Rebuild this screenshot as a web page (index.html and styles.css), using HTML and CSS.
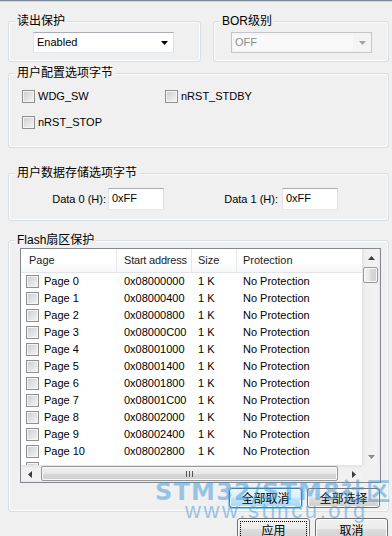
FILE: index.html
```html
<!DOCTYPE html>
<html>
<head>
<meta charset="utf-8">
<link rel="stylesheet" href="styles.css">
</head>
<body>
<div class="window">
  <div class="row-top">
    <div class="group g-read">
      <div class="group-title">读出保护</div>
      <div class="combo">
        <span class="combo-text">Enabled</span>
        <span class="combo-arrow"><svg width="7" height="4" viewBox="0 0 7 4"><polygon points="0,0 7,0 3.5,4" fill="#000"/></svg></span>
      </div>
    </div>
    <div class="group g-bor">
      <div class="group-title">BOR级别</div>
      <div class="combo disabled">
        <span class="combo-text"><span class="combo-sel">OFF</span></span>
        <span class="combo-arrow"><svg width="7" height="4" viewBox="0 0 7 4"><polygon points="0,0 7,0 3.5,4" fill="#a3a3a3"/></svg></span>
      </div>
    </div>
  </div>

  <div class="group g-user">
    <div class="group-title">用户配置选项字节</div>
    <div class="check-grid">
      <label class="check"><span class="box"></span><span>WDG_SW</span></label>
      <label class="check"><span class="box"></span><span>nRST_STDBY</span></label>
      <label class="check"><span class="box"></span><span>nRST_STOP</span></label>
    </div>
  </div>

  <div class="group g-data">
    <div class="group-title">用户数据存储选项字节</div>
    <div class="data-row">
      <span class="data-label l0">Data 0 (H):</span>
      <span class="input">0xFF</span>
      <span class="data-label l1">Data 1 (H):</span>
      <span class="input">0xFF</span>
    </div>
  </div>

  <div class="group g-flash">
    <div class="group-title">Flash扇区保护</div>
    <div class="listview">
      <div class="lv-main">
        <div class="lv-head">
          <div class="hc c1">Page</div>
          <div class="hc c2">Start address</div>
          <div class="hc c3">Size</div>
          <div class="hc c4">Protection</div>
        </div>
        <div class="lv-row"><div class="cc c1"><span class="box"></span>Page 0</div><div class="cc c2">0x08000000</div><div class="cc c3">1 K</div><div class="cc c4">No Protection</div></div>
        <div class="lv-row"><div class="cc c1"><span class="box"></span>Page 1</div><div class="cc c2">0x08000400</div><div class="cc c3">1 K</div><div class="cc c4">No Protection</div></div>
        <div class="lv-row"><div class="cc c1"><span class="box"></span>Page 2</div><div class="cc c2">0x08000800</div><div class="cc c3">1 K</div><div class="cc c4">No Protection</div></div>
        <div class="lv-row"><div class="cc c1"><span class="box"></span>Page 3</div><div class="cc c2">0x08000C00</div><div class="cc c3">1 K</div><div class="cc c4">No Protection</div></div>
        <div class="lv-row"><div class="cc c1"><span class="box"></span>Page 4</div><div class="cc c2">0x08001000</div><div class="cc c3">1 K</div><div class="cc c4">No Protection</div></div>
        <div class="lv-row"><div class="cc c1"><span class="box"></span>Page 5</div><div class="cc c2">0x08001400</div><div class="cc c3">1 K</div><div class="cc c4">No Protection</div></div>
        <div class="lv-row"><div class="cc c1"><span class="box"></span>Page 6</div><div class="cc c2">0x08001800</div><div class="cc c3">1 K</div><div class="cc c4">No Protection</div></div>
        <div class="lv-row"><div class="cc c1"><span class="box"></span>Page 7</div><div class="cc c2">0x08001C00</div><div class="cc c3">1 K</div><div class="cc c4">No Protection</div></div>
        <div class="lv-row"><div class="cc c1"><span class="box"></span>Page 8</div><div class="cc c2">0x08002000</div><div class="cc c3">1 K</div><div class="cc c4">No Protection</div></div>
        <div class="lv-row"><div class="cc c1"><span class="box"></span>Page 9</div><div class="cc c2">0x08002400</div><div class="cc c3">1 K</div><div class="cc c4">No Protection</div></div>
        <div class="lv-row"><div class="cc c1"><span class="box"></span>Page 10</div><div class="cc c2">0x08002800</div><div class="cc c3">1 K</div><div class="cc c4">No Protection</div></div>
        <div class="lv-row partial"><div class="cc c1"><span class="box"></span></div></div>
      </div>
      <div class="vscroll">
        <div class="sb-arrow"><svg width="7" height="4" viewBox="0 0 7 4"><polygon points="0,4 7,4 3.5,0" fill="#3c3c3c"/></svg></div>
        <div class="vthumb"></div>
        <div class="sb-fill"></div>
        <div class="sb-arrow"><svg width="7" height="4" viewBox="0 0 7 4"><polygon points="0,0 7,0 3.5,4" fill="#8a8a8a"/></svg></div>
      </div>
      <div class="hscroll">
        <div class="sb-arrow h"><svg width="4" height="7" viewBox="0 0 4 7"><polygon points="4,0 4,7 0,3.5" fill="#3c3c3c"/></svg></div>
        <div class="hthumb"><svg width="7" height="6" viewBox="0 0 7 6"><rect x="0" y="0" width="1" height="6" fill="#555"/><rect x="3" y="0" width="1" height="6" fill="#555"/><rect x="6" y="0" width="1" height="6" fill="#555"/></svg></div>
        <div class="sb-fill"></div>
        <div class="sb-arrow h"><svg width="4" height="7" viewBox="0 0 4 7"><polygon points="0,0 0,7 4,3.5" fill="#3c3c3c"/></svg></div>
      </div>
      <div class="corner"></div>
    </div>
    <div class="btn-row inner">
      <div class="btn hot">全部取消</div>
      <div class="btn">全部选择</div>
    </div>
  </div>

  <div class="btn-row bottom">
    <div class="btn tall focus">应用</div>
    <div class="btn tall">取消</div>
  </div>

  <div class="watermark wm1">STM32/STM8社区</div>
  <div class="watermark wm2">www.stmcu.org</div>
</div>
</body>
</html>
```

FILE: styles.css
```css
* { box-sizing: border-box; }
html, body { margin: 0; padding: 0; background: #f0f0f0; }
body {
  font: 11px "Liberation Sans", "Noto Sans CJK SC", sans-serif;
  color: #000;
}
.window {
  position: relative;
  width: 392px;
  height: 536px;
  overflow: hidden;
  border-top: 1px solid #7d8a99;
  box-shadow: inset 0 1px 0 #cfd7df;
  padding: 20px 3px 0 8px;
  background: #f0f0f0;
}
.row-top { display: flex; gap: 12px; }
.group {
  border: 1px solid #d5dfe5;
  border-radius: 3px;
  box-shadow: inset 0 0 0 1px #fbfcfd;
}
.group-title {
  width: fit-content;
  margin: -8px 0 0 6px;
  padding: 0 2px;
  background: #f0f0f0;
  font: 12px/14px "Liberation Sans", "Noto Sans CJK SC", sans-serif;
}
.g-read { width: 193px; padding-bottom: 8px; }
.g-bor { width: 176px; padding-bottom: 8px; }
.combo {
  display: flex;
  width: 141px;
  height: 21px;
  margin-top: 4px;
  background: #fff;
  border: 1px solid;
  border-color: #abadb3 #dbdfe6 #e3e9ef #e2e3ea;
}
.g-read .combo { margin-left: 24px; }
.g-bor .combo { margin-left: 17px; }
.combo-text { flex: 1; padding-left: 3px; line-height: 19px; }
.combo-arrow { width: 17px; display: flex; align-items: center; justify-content: center; padding-top: 1px; }
.combo.disabled {
  background: #f4f4f4;
  border-color: #c3c5c8;
  color: #8c8c8c;
}
.combo.disabled .combo-text { padding: 2px 1px 2px 2px; line-height: 15px; }
.combo-sel { display: block; background: #f9f9f9; padding-left: 1px; }
.g-user { margin-top: 11px; padding-bottom: 18px; }
.check-grid {
  display: grid;
  grid-template-columns: 143px auto;
  row-gap: 13px;
  margin: 10px 0 0 13px;
}
.check { display: flex; align-items: center; gap: 3px; line-height: 13px; }
.box {
  display: inline-block;
  flex: none;
  width: 13px;
  height: 13px;
  border: 1px solid #8f8f8f;
  background: linear-gradient(135deg, #c9ccd0, #eeeeee 80%, #f6f6f6);
  box-shadow: inset 0 0 0 1px #f4f4f4;
}
.g-data { margin-top: 25px; padding-bottom: 10px; }
.data-row { display: flex; align-items: center; margin-top: 8px; }
.data-label { text-align: right; line-height: 14px; }
.data-label.l0 { width: 97px; margin-right: 2px; }
.data-label.l1 { width: 114px; margin-right: 4px; }
.input {
  width: 56px;
  height: 22px;
  padding: 2px 3px 4px 3px;
  line-height: 14px;
  background: #fff;
  border: 1px solid;
  border-color: #abadb3 #dbdfe6 #e3e9ef #e2e3ea;
}
.g-flash { margin-top: 19px; padding: 0 8px 3px 0; }
.listview {
  display: grid;
  grid-template-columns: 341px 18px;
  grid-template-rows: 216px 17px;
  width: 361px;
  height: 235px;
  margin: 1px 0 0 11px;
  border: 1px solid #828790;
  background: #fff;
}
.lv-main { overflow: hidden; background: #fff; }
.lv-head, .lv-row {
  display: grid;
  grid-template-columns: 96px 75px 45px 1fr;
}
.lv-head {
  height: 24px;
  background: linear-gradient(#ffffff, #ffffff 55%, #f6f7f9);
  border-bottom: 1px solid #e2e4e7;
}
.hc { line-height: 23px; white-space: nowrap; border-right: 1px solid #e4e7eb; color: #1b1b1b; }
.hc.c4 { border-right: none; }
.hc.c1 { padding-left: 8px; }
.hc.c2 { padding-left: 7px; letter-spacing: -0.2px; }
.hc.c3, .hc.c4 { padding-left: 6px; }
.lv-row { height: 17px; line-height: 17px; }
.cc { white-space: nowrap; }
.cc.c1 { display: flex; align-items: center; gap: 5px; padding-left: 5px; }
.lv-row.partial .cc.c1 { height: 17px; }
.cc.c2 { padding-left: 7px; }
.cc.c3, .cc.c4 { padding-left: 6px; }
.vscroll {
  display: flex;
  flex-direction: column;
  background: linear-gradient(90deg, #e5e5e5, #f0f0f0 15%, #f2f2f2 85%, #e8e8e8);
  border-left: 1px solid #e6e6e6;
}
.sb-arrow { flex: none; width: 17px; height: 17px; display: flex; align-items: center; justify-content: center; }
.sb-fill { flex: 1; }
.vthumb {
  flex: none;
  width: 15px;
  height: 16px;
  margin: 1px 0 0 0;
  border: 1px solid #989898;
  border-radius: 2px;
  background: linear-gradient(90deg, #f3f3f3, #e6e6e6 50%, #d9d9d9 50%, #d0d0d0);
  box-shadow: inset 0 0 0 1px #f8f8f8;
}
.hscroll {
  display: flex;
  background: linear-gradient(#e5e5e5, #f0f0f0 15%, #f2f2f2 85%, #e8e8e8);
  border-top: 1px solid #e6e6e6;
}
.hthumb {
  flex: none;
  width: 297px;
  height: 15px;
  margin: 0 0 0 3px;
  border: 1px solid #989898;
  border-radius: 2px;
  background: linear-gradient(#f3f3f3, #e6e6e6 50%, #d9d9d9 50%, #d0d0d0);
  box-shadow: inset 0 0 0 1px #f8f8f8;
  display: flex;
  align-items: center;
  justify-content: center;
}
.corner { background: #f0f0f0; }
.btn-row { display: flex; justify-content: flex-end; gap: 5px; }
.btn-row.inner { margin-top: 5px; }
.btn-row.bottom { margin-top: 6px; margin-right: 1px; }
.btn {
  width: 73px;
  height: 20px;
  border: 1px solid #707070;
  border-radius: 3px;
  background: linear-gradient(#f2f2f2, #ebebeb 50%, #dddddd 50%, #cfcfcf);
  box-shadow: inset 0 0 0 1px #fcfcfc;
  display: flex;
  align-items: center;
  justify-content: center;
  font: 12px/14px "Noto Sans CJK SC", sans-serif;
}
.btn.tall { height: 23px; }
.btn.hot {
  border-color: #3c7fb1;
  background: linear-gradient(#eaf6fd, #d9f0fc 50%, #bee6fd 50%, #a7d9f5);
  box-shadow: inset 0 0 0 1px #fcfcfc, 0 0 0 1px #8fd0f5;
}
.btn.focus { outline: 1px dotted #000; outline-offset: -4px; }
.watermark {
  position: absolute;
  white-space: nowrap;
  color: rgba(60, 150, 215, 0.5);
  pointer-events: none;
}
.wm1 {
  left: 155px;
  top: 479px;
  font: bold 24px/24px "DejaVu Sans", "Noto Sans CJK SC", sans-serif;
  letter-spacing: 1.2px;
}
.wm2 {
  left: 185px;
  top: 499px;
  font: 22px/22px "Liberation Sans", sans-serif;
  letter-spacing: 2.6px;
}
```
